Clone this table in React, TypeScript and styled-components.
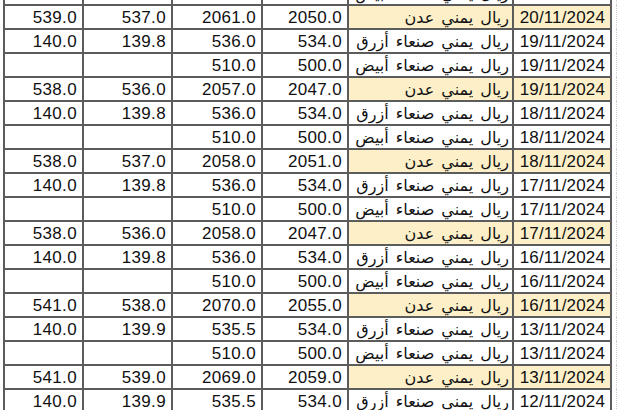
import React from 'react';
import styled, { createGlobalStyle } from 'styled-components';

const GlobalStyle = createGlobalStyle`
  html, body {
    margin: 0;
    padding: 0;
    background: #ffffff;
    overflow: hidden;
  }
`;

interface IRateRow {
  sellHigh: string;
  sellLow: string;
  buyHigh: string;
  buyLow: string;
  currency: string;
  date: string;
}

const ADEN = 'ريال يمني عدن';
const BLUE = 'ريال يمني صنعاء أزرق';
const WHITE = 'ريال يمني صنعاء أبيض';

const rows: IRateRow[] = [
  { sellHigh: '', sellLow: '', buyHigh: '510.0', buyLow: '500.0', currency: WHITE, date: '20/11/2024' },
  { sellHigh: '539.0', sellLow: '537.0', buyHigh: '2061.0', buyLow: '2050.0', currency: ADEN, date: '20/11/2024' },
  { sellHigh: '140.0', sellLow: '139.8', buyHigh: '536.0', buyLow: '534.0', currency: BLUE, date: '19/11/2024' },
  { sellHigh: '', sellLow: '', buyHigh: '510.0', buyLow: '500.0', currency: WHITE, date: '19/11/2024' },
  { sellHigh: '538.0', sellLow: '536.0', buyHigh: '2057.0', buyLow: '2047.0', currency: ADEN, date: '19/11/2024' },
  { sellHigh: '140.0', sellLow: '139.8', buyHigh: '536.0', buyLow: '534.0', currency: BLUE, date: '18/11/2024' },
  { sellHigh: '', sellLow: '', buyHigh: '510.0', buyLow: '500.0', currency: WHITE, date: '18/11/2024' },
  { sellHigh: '538.0', sellLow: '537.0', buyHigh: '2058.0', buyLow: '2051.0', currency: ADEN, date: '18/11/2024' },
  { sellHigh: '140.0', sellLow: '139.8', buyHigh: '536.0', buyLow: '534.0', currency: BLUE, date: '17/11/2024' },
  { sellHigh: '', sellLow: '', buyHigh: '510.0', buyLow: '500.0', currency: WHITE, date: '17/11/2024' },
  { sellHigh: '538.0', sellLow: '536.0', buyHigh: '2058.0', buyLow: '2047.0', currency: ADEN, date: '17/11/2024' },
  { sellHigh: '140.0', sellLow: '139.8', buyHigh: '536.0', buyLow: '534.0', currency: BLUE, date: '16/11/2024' },
  { sellHigh: '', sellLow: '', buyHigh: '510.0', buyLow: '500.0', currency: WHITE, date: '16/11/2024' },
  { sellHigh: '541.0', sellLow: '538.0', buyHigh: '2070.0', buyLow: '2055.0', currency: ADEN, date: '16/11/2024' },
  { sellHigh: '140.0', sellLow: '139.9', buyHigh: '535.5', buyLow: '534.0', currency: BLUE, date: '13/11/2024' },
  { sellHigh: '', sellLow: '', buyHigh: '510.0', buyLow: '500.0', currency: WHITE, date: '13/11/2024' },
  { sellHigh: '541.0', sellLow: '539.0', buyHigh: '2069.0', buyLow: '2059.0', currency: ADEN, date: '13/11/2024' },
  { sellHigh: '140.0', sellLow: '139.9', buyHigh: '535.5', buyLow: '534.0', currency: BLUE, date: '12/11/2024' },
];

// column widths, border centre to border centre
const colWidths = [79, 89, 90, 86, 165, 98, 5];

const Sheet = styled.table`
  border-collapse: collapse;
  table-layout: fixed;
  width: ${colWidths.reduce((a, b) => a + b, 0)}px;
  margin: -20px 0 0 3px;
  font-family: 'Liberation Sans', Arial, sans-serif;
  color: #111111;
`;

const Row = styled.tr`
  height: 24px;
`;

const Cell = styled.td<{ $highlight?: boolean }>`
  box-sizing: border-box;
  height: 24px;
  padding: 2px 5px 0 0;
  border: 2px solid #5c5c5c;
  background: ${(p) => (p.$highlight ? '#fdf0c9' : '#ffffff')};
  text-align: right;
  vertical-align: bottom;
  font-size: 17px;
  letter-spacing: 0.35px;
  line-height: 20px;
  white-space: nowrap;
  overflow: hidden;
`;

const DateCell = styled(Cell)`
  letter-spacing: 0.15px;
`;

const NameCell = styled(Cell)`
  direction: rtl;
  text-align: right;
  padding: 2px 3px 0 0;
  font-family: 'DejaVu Sans', 'Liberation Sans', sans-serif;
  font-size: 16px;
  word-spacing: 2px;
  letter-spacing: 0;
`;

const EdgeCell = styled.td`
  border: none;
  border-right: 1px dotted #cfcfcf;
  padding: 0;
`;

export default function App() {
  return (
    <>
      <GlobalStyle />
      <Sheet>
        <colgroup>
          {colWidths.map((w, i) => (
            <col key={i} style={{ width: w }} />
          ))}
        </colgroup>
        <tbody>
          {rows.map((r, i) => {
            const aden = r.currency === ADEN;
            return (
              <Row key={i}>
                <Cell>{r.sellHigh}</Cell>
                <Cell>{r.sellLow}</Cell>
                <Cell>{r.buyHigh}</Cell>
                <Cell>{r.buyLow}</Cell>
                <NameCell $highlight={aden}>{r.currency}</NameCell>
                <DateCell $highlight={aden}>{r.date}</DateCell>
                <EdgeCell />
              </Row>
            );
          })}
        </tbody>
      </Sheet>
    </>
  );
}
